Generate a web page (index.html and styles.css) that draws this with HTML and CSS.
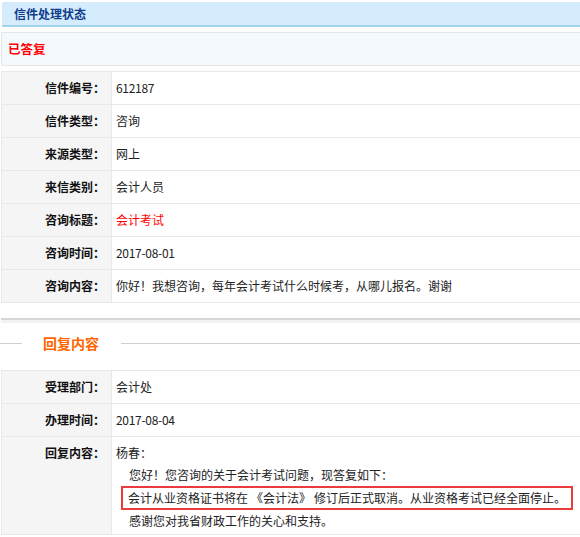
FILE: index.html
```html
<!DOCTYPE html>
<html lang="zh-CN">
<head>
<meta charset="utf-8">
<title>信件处理状态</title>
<link rel="stylesheet" href="styles.css">
</head>
<body>
<div class="page">
  <div class="panel-head">信件处理状态</div>
  <div class="status">已答复</div>

  <div class="info">
    <div class="k">信件编号：</div><div class="v num">612187</div>
    <div class="k">信件类型：</div><div class="v">咨询</div>
    <div class="k">来源类型：</div><div class="v">网上</div>
    <div class="k">来信类别：</div><div class="v">会计人员</div>
    <div class="k">咨询标题：</div><div class="v red">会计考试</div>
    <div class="k">咨询时间：</div><div class="v num">2017-08-01</div>
    <div class="k">咨询内容：</div><div class="v">你好！我想咨询，每年会计考试什么时候考，从哪儿报名。谢谢</div>
  </div>

  <div class="section">
    <div class="section-title"><span>回复内容</span></div>
    <div class="info">
      <div class="k">受理部门：</div><div class="v">会计处</div>
      <div class="k">办理时间：</div><div class="v num">2017-08-04</div>
      <div class="k tall">回复内容：</div>
      <div class="v tall">
        <div class="line">杨春：</div>
        <div class="line indent">您好！您咨询的关于会计考试问题，现答复如下：</div>
        <div class="line marked"><span class="mark">会计从业资格证书将在<span class="quote">《会计法》</span>修订后正式取消。从业资格考试已经全面停止。</span></div>
        <div class="line indent">感谢您对我省财政工作的关心和支持。</div>
      </div>
    </div>
  </div>
</div>
</body>
</html>
```

FILE: styles.css
```css
html, body {
  margin: 0;
  padding: 0;
  overflow: hidden;
  background: #ffffff;
}

body {
  font-family: "Noto Sans CJK SC", "Liberation Sans", sans-serif;
  font-size: 12px;
  color: #222222;
}

.page {
  width: 600px;
  padding: 2px 0 0 1px;
}

.panel-head {
  height: 23px;
  line-height: 23px;
  background: #d5ecfc;
  border-bottom: 2px solid #a3d2ee;
  color: #0f3d8c;
  font-weight: bold;
  padding-left: 12px;
  margin-left: 1px;
}

.status {
  margin-top: 5px;
  height: 32px;
  line-height: 32px;
  background: #f4f9fe;
  border: 1px solid #e6e6e6;
  color: #ff0000;
  font-weight: bold;
  font-size: 12.5px;
  padding-left: 6px;
}

.info {
  margin-top: 5px;
  display: grid;
  grid-template-columns: 110px 1fr;
  border: 1px solid #e8e8e8;
  border-bottom: none;
}

.info .k {
  background: #f5f5f5;
  border-right: 1px solid #e8e8e8;
  border-bottom: 1px solid #e8e8e8;
  height: 32px;
  line-height: 32px;
  text-align: right;
  padding-right: 6px;
  font-weight: bold;
  color: #111111;
}

.info .v {
  border-bottom: 1px solid #e8e8e8;
  height: 32px;
  line-height: 32px;
  padding-left: 4px;
  color: #222222;
}

.info .v.red {
  color: #ff0000;
}

.info .v.num {
  letter-spacing: -0.3px;
}

.section {
  margin-top: 15px;
  border-top: 2px solid #d6d6d6;
  padding-top: 3px;
  background: linear-gradient(#f3f3f3 0, #f3f3f3 3px, #ffffff 3px);
}

.section-title {
  display: flex;
  align-items: center;
  height: 20px;
  margin-top: 10px;
  margin-left: -1px;
  color: #ff6600;
  font-weight: bold;
  font-size: 14px;
}

.section-title::before {
  content: "";
  width: 22px;
  height: 1px;
  background: #cfcfcf;
}

.section-title::after {
  content: "";
  flex: 1;
  height: 1px;
  background: #cfcfcf;
}

.section-title span {
  padding: 0 22px 0 21px;
  line-height: 20px;
}

.section .info {
  margin-top: 17px;
}

.info .k.tall {
  height: auto;
  line-height: 22px;
  padding-top: 5px;
}

.info .v.tall {
  height: auto;
  line-height: 22px;
  padding-top: 5px;
  padding-bottom: 2px;
}

.line {
  height: 22px;
}

.line.indent {
  padding-left: 13px;
}

.line.marked {
  height: 24px;
}

.mark {
  display: inline-block;
  margin-left: 5px;
  padding: 0 5px;
  line-height: 20px;
  border: 2px solid #ea3b3d;
  white-space: nowrap;
}

.quote {
  margin: 0 3px;
}
```
